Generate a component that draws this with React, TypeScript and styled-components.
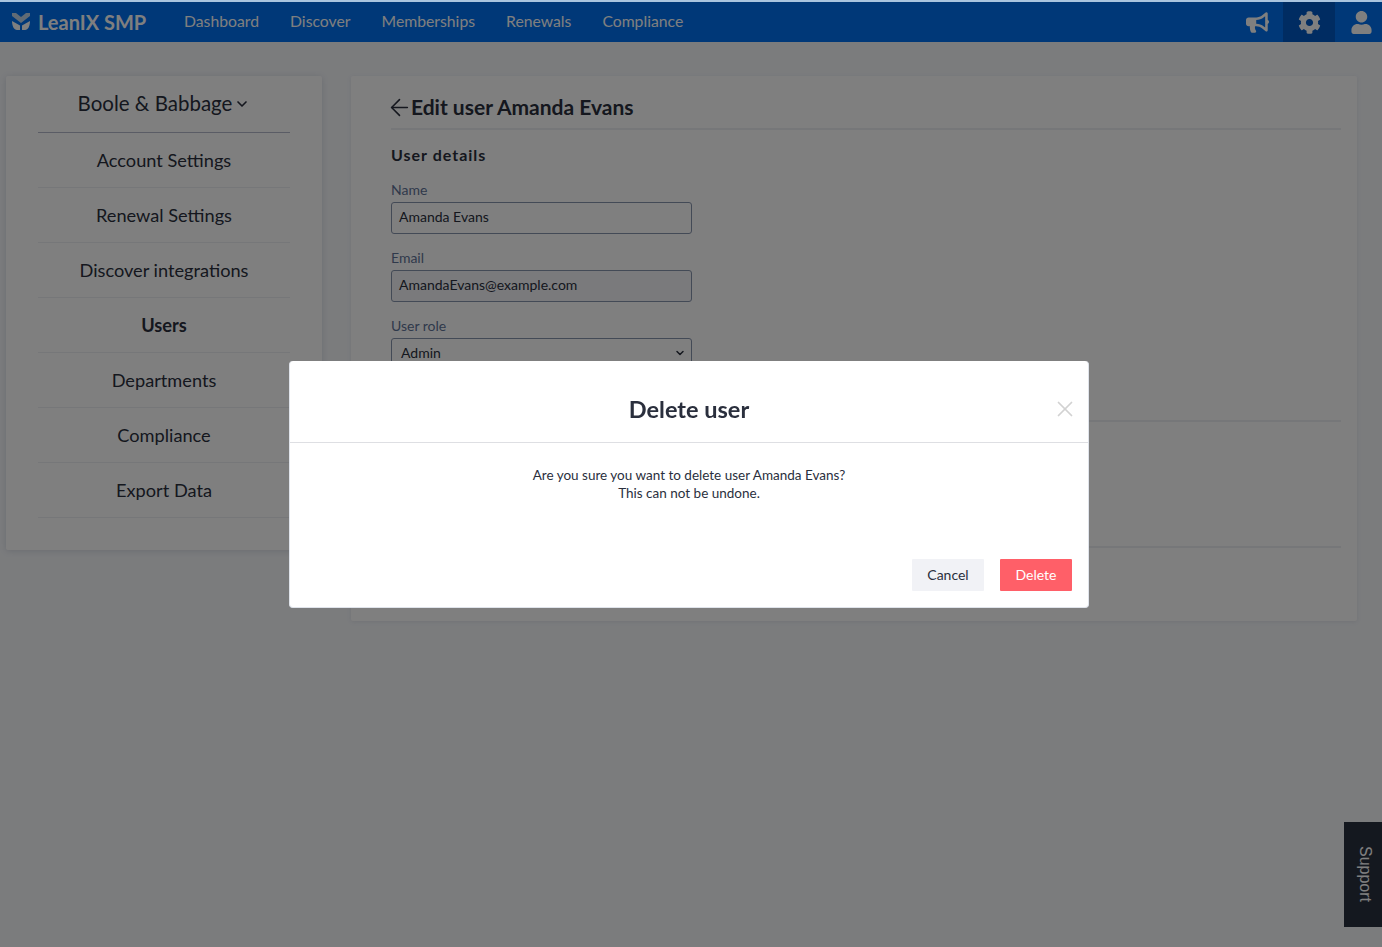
import React from 'react';
import styled, { createGlobalStyle } from 'styled-components';
import { FaBullhorn, FaCog, FaUser } from 'react-icons/fa';
import { ArrowLeft, ChevronDown, X } from 'lucide-react';

const GlobalStyle = createGlobalStyle`
  html, body {
    margin: 0;
    padding: 0;
    background: #f6f8fb;
    font-family: Lato, "Noto Sans", sans-serif;
    color: #2a2f3d;
    overflow: hidden;
  }
  * { box-sizing: border-box; }
`;

const Page = styled.div`
  min-height: 947px;
  display: flex;
  flex-direction: column;
`;

const NavBar = styled.header`
  height: 42px;
  display: flex;
  align-items: stretch;
  background: #0070f0;
  border-top: 2px solid #a9c4de;
  color: #fff;
`;

const Brand = styled.div`
  display: flex;
  align-items: center;
  gap: 8px;
  padding: 0 0 1px 12px;
  width: 184px;
  font-size: 20px;
  font-weight: 700;
`;

const NavLinks = styled.nav`
  display: flex;
  align-items: center;
  gap: 31px;
  flex: 1;
  padding-bottom: 3px;
`;

const NavLink = styled.a`
  font-size: 15.75px;
`;

const NavIcons = styled.div`
  display: flex;
  margin-right: -5px;
`;

const NavIcon = styled.div<{ $active?: boolean }>`
  width: 52px;
  display: flex;
  align-items: center;
  justify-content: center;
  font-size: 23px;
  background: ${(p) => (p.$active ? '#0058c4' : 'transparent')};
`;

const Content = styled.main`
  display: flex;
  align-items: flex-start;
  gap: 29px;
  padding: 34px 25px 0 6px;
`;

const SideCard = styled.aside`
  width: 316px;
  height: 474px;
  flex: none;
  padding: 0 32px;
  background: #fff;
  border-radius: 2px;
  box-shadow: 0 1px 6px rgba(90, 100, 130, 0.2);
`;

const AccountName = styled.div`
  height: 57px;
  display: flex;
  align-items: center;
  justify-content: center;
  padding-bottom: 2px;
  font-size: 20.5px;
  border-bottom: 1px solid #b4b9ca;
`;

const AccountChevron = styled(ChevronDown)`
  margin: 1px 0 0 2px;
`;

const SideItem = styled.div<{ $active?: boolean }>`
  height: 55px;
  display: flex;
  align-items: center;
  justify-content: center;
  font-size: 18.2px;
  font-weight: ${(p) => (p.$active ? 700 : 400)};
  border-bottom: 1px solid #eceef2;
`;

const MainCard = styled.section`
  flex: 1;
  height: 545px;
  padding: 0 16px 0 40px;
  background: #fff;
  border-radius: 2px;
  box-shadow: 0 1px 4px rgba(90, 100, 130, 0.12);
`;

const TitleRow = styled.div`
  height: 54px;
  display: flex;
  align-items: center;
  padding-top: 9px;
  font-size: 21px;
  font-weight: 700;
  border-bottom: 2px solid #eceef2;
`;

const BackArrow = styled(ArrowLeft)`
  margin: 1px -2px 0 -5px;
`;

const SectionTitle = styled.h3`
  margin: 16px 0 18px;
  font-size: 16px;
  line-height: 18px;
  font-weight: 700;
  letter-spacing: 1px;
`;

const FormField = styled.div`
  margin-bottom: 16px;
`;

const FieldLabel = styled.label`
  display: block;
  height: 20px;
  font-size: 14px;
  line-height: 16px;
  color: #5f7397;
`;

const InputBox = styled.div<{ $disabled?: boolean; $select?: boolean }>`
  width: 301px;
  height: 32px;
  display: flex;
  align-items: center;
  justify-content: space-between;
  padding: ${(p) => (p.$select ? '0 5px 3px 9px' : '0 7px 3px')};
  font-size: 14px;
  color: #2a2f3d;
  border: 1px solid #8794ad;
  border-radius: 3px;
  background: ${(p) => (p.$disabled ? '#f4f5f8' : '#fff')};
`;

const SectionRule = styled.div<{ $gap: number }>`
  margin-top: ${(p) => p.$gap}px;
  border-top: 2px solid #eceef2;
`;

const SupportTab = styled.div`
  position: fixed;
  right: 0;
  top: 822px;
  width: 38px;
  height: 105px;
  display: flex;
  align-items: center;
  justify-content: center;
  padding-left: 3px;
  background: #29303f;
  color: #fff;
  font-family: "Liberation Sans", sans-serif;
  font-size: 16px;
  writing-mode: vertical-rl;
`;

const Overlay = styled.div`
  position: fixed;
  inset: 2px 0 0;
  display: flex;
  justify-content: center;
  align-items: flex-start;
  padding: 359px 4px 0 0;
  background: rgba(0, 0, 0, 0.5);
`;

const Dialog = styled.div`
  width: 800px;
  height: 247px;
  background: #fff;
  border: 1px solid #dfe3ea;
  border-top: 0;
  border-radius: 4px;
  display: flex;
  flex-direction: column;
`;

const DialogHeader = styled.div`
  position: relative;
  height: 82px;
  display: flex;
  align-items: center;
  justify-content: center;
  padding-top: 15px;
  font-size: 23.5px;
  font-weight: 700;
  border-bottom: 1px solid #dedfe3;
`;

const CloseButton = styled.span`
  position: absolute;
  right: 10px;
  top: 35px;
  display: flex;
  color: #d2d2d2;
`;

const DialogBody = styled.div`
  flex: 1;
  padding-top: 23px;
  text-align: center;
  font-size: 13.5px;
  line-height: 18px;
`;

const DialogFooter = styled.div`
  display: flex;
  justify-content: flex-end;
  gap: 16px;
  padding: 0 16px 16px 0;
`;

const DialogButton = styled.button<{ $danger?: boolean }>`
  width: 72px;
  height: 32px;
  padding: 0 0 2px;
  border: 0;
  border-radius: 1px;
  font-family: inherit;
  font-size: 14px;
  background: ${(p) => (p.$danger ? '#ff5f68' : '#f1f2f6')};
  color: ${(p) => (p.$danger ? '#fff' : '#2a2f3d')};
`;

const navItems = ['Dashboard', 'Discover', 'Memberships', 'Renewals', 'Compliance'];
const sideItems = [
  'Account Settings',
  'Renewal Settings',
  'Discover integrations',
  'Users',
  'Departments',
  'Compliance',
  'Export Data',
];

function Logo() {
  return (
    <svg width="18" height="17" viewBox="0 0 18 17">
      <path fill="#c2d6ea" d="M0 0h4l5 4 5-4h4v3l-9 7-9-7z" />
      <path fill="#fff" d="M0 8l8 4.500V17H5C2 17 0 13 0 8z" />
      <path fill="#fff" d="M18 8l-8 4.500V17h3c3 0 5-4 5-9z" />
    </svg>
  );
}

function App() {
  return (
    <Page>
      <GlobalStyle />
      <NavBar>
        <Brand>
          <Logo />
          LeanIX SMP
        </Brand>
        <NavLinks>
          {navItems.map((item) => (
            <NavLink key={item}>{item}</NavLink>
          ))}
        </NavLinks>
        <NavIcons>
          <NavIcon><FaBullhorn /></NavIcon>
          <NavIcon $active><FaCog /></NavIcon>
          <NavIcon><FaUser /></NavIcon>
        </NavIcons>
      </NavBar>
      <Content>
        <SideCard>
          <AccountName>
            Boole &amp; Babbage
            <AccountChevron size={16} strokeWidth={2.5} />
          </AccountName>
          {sideItems.map((item) => (
            <SideItem key={item} $active={item === 'Users'}>{item}</SideItem>
          ))}
        </SideCard>
        <MainCard>
          <TitleRow>
            <BackArrow size={27} strokeWidth={1.4} />
            Edit user Amanda Evans
          </TitleRow>
          <SectionTitle>User details</SectionTitle>
          <FormField>
            <FieldLabel>Name</FieldLabel>
            <InputBox>Amanda Evans</InputBox>
          </FormField>
          <FormField>
            <FieldLabel>Email</FieldLabel>
            <InputBox $disabled>AmandaEvans@example.com</InputBox>
          </FormField>
          <FormField>
            <FieldLabel>User role</FieldLabel>
            <InputBox $select>
              Admin
              <ChevronDown size={12} strokeWidth={3} />
            </InputBox>
          </FormField>
          <SectionRule $gap={50} />
          <SectionRule $gap={124} />
        </MainCard>
      </Content>
      <SupportTab>Support</SupportTab>
      <Overlay>
        <Dialog>
          <DialogHeader>
            Delete user
            <CloseButton><X size={26} strokeWidth={1.6} /></CloseButton>
          </DialogHeader>
          <DialogBody>
            Are you sure you want to delete user Amanda Evans?
            <br />
            This can not be undone.
          </DialogBody>
          <DialogFooter>
            <DialogButton>Cancel</DialogButton>
            <DialogButton $danger>Delete</DialogButton>
          </DialogFooter>
        </Dialog>
      </Overlay>
    </Page>
  );
}

export default App;
